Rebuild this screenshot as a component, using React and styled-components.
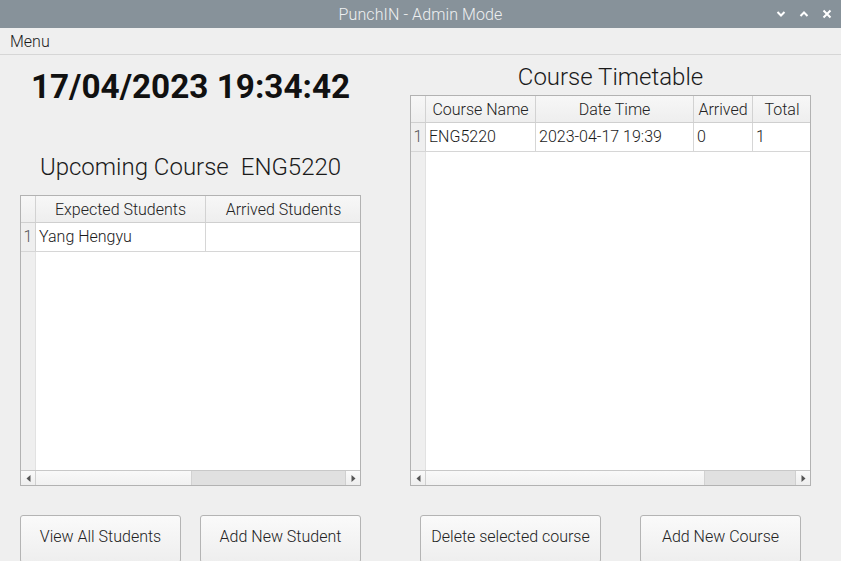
import styled, { createGlobalStyle } from "styled-components";

const GlobalStyle = createGlobalStyle`
  html, body {
    margin: 0;
    padding: 0;
    background: #efefef;
  }
  body {
    font-family: Roboto, "Liberation Sans", sans-serif;
    font-weight: 300;
    color: #1e1e1e;
  }
`;

const studentColumns = [
  { title: "Expected Students", width: 170 },
  { title: "Arrived Students", width: 156 },
];

const studentRows = [["Yang Hengyu", ""]];

const courseColumns = [
  { title: "Course Name", width: 110 },
  { title: "Date Time", width: 158 },
  { title: "Arrived", width: 59 },
  { title: "Total", width: 59 },
];

const courseRows = [["ENG5220", "2023-04-17 19:39", "0", "1"]];

const Chevron = ({ up }) => (
  <svg width="10" height="8" viewBox="0 0 10 8">
    <path
      d={up ? "M1.5 6 L5 2.5 L8.5 6" : "M1.5 2 L5 5.5 L8.5 2"}
      fill="none"
      stroke="#fff"
      strokeWidth="2"
    />
  </svg>
);

const Cross = () => (
  <svg width="10" height="10" viewBox="0 0 10 10">
    <path d="M1.5 1.5 L8.5 8.5 M8.5 1.5 L1.5 8.5" stroke="#fff" strokeWidth="2" />
  </svg>
);

const Arrow = ({ right }) => (
  <svg width="5" height="7" viewBox="0 0 5 7">
    <path d={right ? "M0.5 0 L4.5 3.5 L0.5 7 Z" : "M4.5 0 L0.5 3.5 L4.5 7 Z"} fill="#555" />
  </svg>
);

const DataTable = ({ columns, rows, handleLeft }) => (
  <TableFrame>
    <HeaderRow>
      <Corner />
      {columns.map((c) => (
        <HeaderCell key={c.title} $w={c.width}>
          {c.title}
        </HeaderCell>
      ))}
    </HeaderRow>
    <Body>
      {rows.map((r, i) => (
        <DataRow key={i}>
          <RowNumber>{i + 1}</RowNumber>
          {columns.map((c, j) => (
            <Cell key={c.title} $w={c.width}>
              {r[j]}
            </Cell>
          ))}
        </DataRow>
      ))}
      <Filler>
        <Gutter />
      </Filler>
    </Body>
    <ScrollBar>
      <ScrollButton>
        <Arrow />
      </ScrollButton>
      <Track>
        <Handle style={{ marginLeft: handleLeft }} />
      </Track>
      <ScrollButton $end>
        <Arrow right />
      </ScrollButton>
    </ScrollBar>
  </TableFrame>
);

export default function App() {
  return (
    <>
      <GlobalStyle />
      <Window>
        <TitleBar>
          <Title>PunchIN - Admin Mode</Title>
          <Controls>
            <Chevron />
            <Chevron up />
            <Cross />
          </Controls>
        </TitleBar>
        <MenuBar>
          <MenuItem>Menu</MenuItem>
        </MenuBar>
        <Content>
          <Column $w={341}>
            <Clock>17/04/2023 19:34:42</Clock>
            <Upcoming>
              <span>Upcoming Course</span>
              <span>ENG5220</span>
            </Upcoming>
            <DataTable columns={studentColumns} rows={studentRows} handleLeft={155} />
            <ButtonRow>
              <Button $w={161}>View All Students</Button>
              <Button $w={161}>Add New Student</Button>
            </ButtonRow>
          </Column>
          <Column $w={401}>
            <Heading>Course Timetable</Heading>
            <DataTable columns={courseColumns} rows={courseRows} handleLeft={278} />
            <ButtonRow $pad={10}>
              <Button $w={181}>Delete selected course</Button>
              <Button $w={161}>Add New Course</Button>
            </ButtonRow>
          </Column>
        </Content>
      </Window>
    </>
  );
}

const Window = styled.div`
  width: 841px;
  height: 561px;
  overflow: hidden;
  display: flex;
  flex-direction: column;
  background: #efefef;
`;

const TitleBar = styled.div`
  height: 28px;
  flex: none;
  background: #87929a;
  display: flex;
  align-items: center;
  justify-content: center;
  position: relative;
`;

const Title = styled.div`
  color: #eef0f1;
  font-size: 16px;
  letter-spacing: 0.1px;
`;

const Controls = styled.div`
  position: absolute;
  right: 9px;
  top: 9px;
  display: flex;
  align-items: center;
  gap: 13px;
`;

const MenuBar = styled.div`
  height: 26px;
  flex: none;
  border-bottom: 1px solid #d6d6d6;
  display: flex;
  align-items: center;
  padding-left: 10px;
`;

const MenuItem = styled.div`
  font-size: 16px;
  color: #1a1a1a;
`;

const Content = styled.div`
  flex: 1;
  display: flex;
  gap: 49px;
  padding-left: 20px;
  min-height: 0;
`;

const Column = styled.div`
  width: ${(p) => p.$w}px;
  display: flex;
  flex-direction: column;
`;

const Clock = styled.div`
  margin-top: 12px;
  height: 40px;
  line-height: 40px;
  font-size: 33.3px;
  font-weight: 700;
  text-align: center;
  color: #111;
`;

const Upcoming = styled.div`
  margin-top: 46px;
  margin-bottom: 14px;
  height: 28px;
  line-height: 28px;
  font-size: 24px;
  display: flex;
  justify-content: center;
  gap: 12px;
  color: #1a1a1a;
`;

const Heading = styled.div`
  margin-top: 8px;
  margin-bottom: 4px;
  height: 28px;
  line-height: 28px;
  font-size: 24px;
  text-align: center;
  color: #1a1a1a;
`;

const TableFrame = styled.div`
  flex: 1;
  display: flex;
  flex-direction: column;
  border: 1px solid #b2b2b2;
  background: #fff;
  overflow: hidden;
  min-height: 0;
`;

const HeaderRow = styled.div`
  display: flex;
  height: 26px;
  flex: none;
  border-bottom: 1px solid #cfcfcf;
  background: linear-gradient(#f7f7f7, #eeeeee);
`;

const Corner = styled.div`
  width: 14px;
  flex: none;
  border-right: 1px solid #d2d2d2;
`;

const HeaderCell = styled.div`
  width: ${(p) => p.$w - 1}px;
  flex: none;
  border-right: 1px solid #d2d2d2;
  font-size: 16px;
  line-height: 28px;
  text-align: center;
  white-space: nowrap;
  color: #222;
`;

const Body = styled.div`
  flex: 1;
  display: flex;
  flex-direction: column;
`;

const DataRow = styled.div`
  display: flex;
  height: 28px;
  flex: none;
  border-bottom: 1px solid #d6d6d6;
`;

const RowNumber = styled.div`
  width: 14px;
  flex: none;
  border-right: 1px solid #d2d2d2;
  background: #efefef;
  font-size: 16px;
  line-height: 28px;
  text-align: center;
  color: #555;
`;

const Cell = styled.div`
  width: ${(p) => p.$w - 4}px;
  flex: none;
  padding-left: 3px;
  border-right: 1px solid #d6d6d6;
  font-size: 16px;
  line-height: 28px;
  white-space: nowrap;
  color: #1a1a1a;
`;

const Filler = styled.div`
  flex: 1;
  display: flex;
`;

const Gutter = styled.div`
  width: 14px;
  border-right: 1px solid #e2e2e2;
  background: #efefef;
`;

const ScrollBar = styled.div`
  height: 14px;
  flex: none;
  display: flex;
  border-top: 1px solid #c8c8c8;
  background: #f4f4f4;
`;

const ScrollButton = styled.div`
  width: 14px;
  flex: none;
  display: flex;
  align-items: center;
  justify-content: center;
  border-left: ${(p) => (p.$end ? "1px solid #d0d0d0" : "none")};
  border-right: ${(p) => (p.$end ? "none" : "1px solid #d0d0d0")};
  background: linear-gradient(#fafafa, #eeeeee);
`;

const Track = styled.div`
  flex: 1;
  display: flex;
  background: linear-gradient(#f9f9f9, #f1f1f1);
`;

const Handle = styled.div`
  flex: 1;
  background: #e0e0e0;
  border-left: 1px solid #d2d2d2;
`;

const ButtonRow = styled.div`
  margin-top: 29px;
  height: 46px;
  flex: none;
  display: flex;
  justify-content: space-between;
  padding: 0 ${(p) => p.$pad || 0}px;
`;

const Button = styled.button`
  width: ${(p) => p.$w}px;
  height: 48px;
  box-sizing: border-box;
  border: 1px solid #b4b4b4;
  border-radius: 3px;
  background: linear-gradient(#fafafa, #eeeeee);
  font-family: Roboto, "Liberation Sans", sans-serif;
  font-weight: 300;
  font-size: 16px;
  color: #222;
  padding: 0 0 6px;
`;
